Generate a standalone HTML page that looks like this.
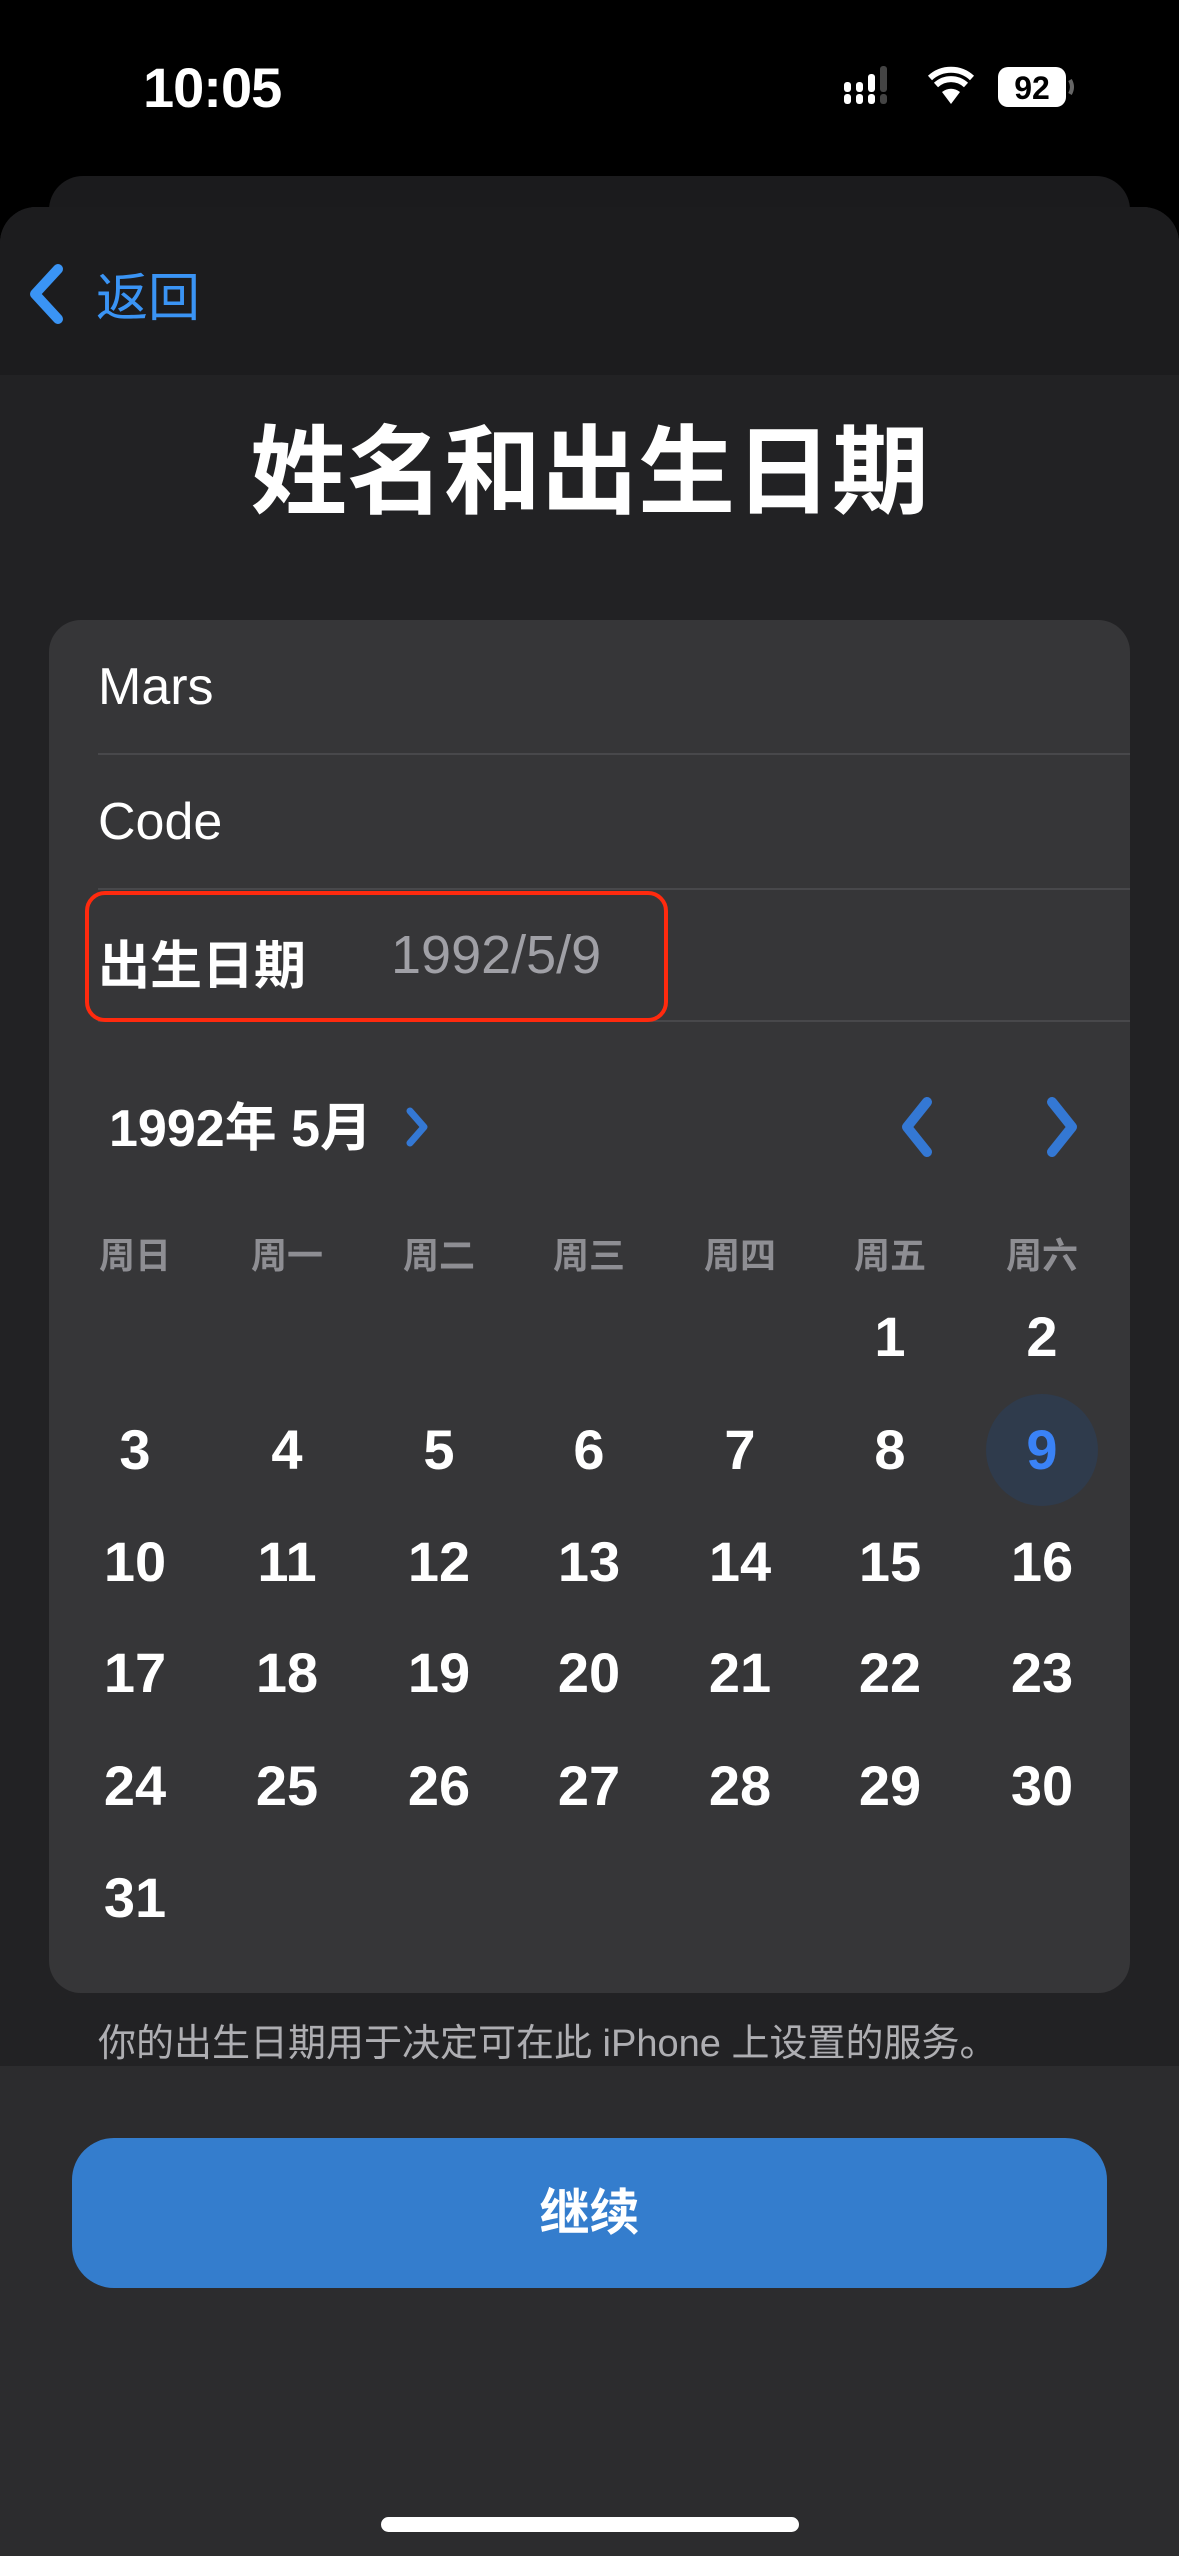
<!DOCTYPE html>
<html><head><meta charset="utf-8"><style>
*{margin:0;padding:0;box-sizing:border-box}
body{width:1179px;height:2556px;background:#000;position:relative;overflow:hidden;font-family:"Liberation Sans","Noto Sans CJK SC",sans-serif;color:#fff}
.abs{position:absolute}
.time{left:143px;top:55px;font-size:56px;font-weight:bold;letter-spacing:-1px}
.back{left:49px;top:176px;width:1081px;height:80px;background:#1b1b1d;border-radius:34px 34px 0 0}
.sheet{left:0;top:207px;width:1179px;height:2349px;background:#222224;border-radius:36px 36px 0 0;overflow:hidden}
.nav{left:0;top:0;width:1179px;height:168px;background:#1c1c1e}
.title{left:0;top:393px;width:1179px;text-align:center;font-size:97px;font-weight:bold}
.card{left:49px;top:620px;width:1081px;height:1373px;background:#363638;border-radius:32px}
.row{left:98px;font-size:52px}
.div{left:98px;width:1032px;height:2px;background:#48484b}
.wd{font-size:36px;color:#8e8e93;width:150px;text-align:center;font-weight:bold}
.d{font-size:56px;width:150px;text-align:center;font-weight:bold}
.bottom{left:0;top:2066px;width:1179px;height:490px;background:#2c2c2e}
</style></head><body>
<div class="abs time">10:05</div>
<svg class="abs" style="left:840px;top:66px" width="260" height="50">
<rect x="4" y="16" width="7" height="10" rx="3" fill="#fff"/><rect x="4" y="28" width="7" height="10" rx="3" fill="#fff"/>
<rect x="16" y="16" width="7" height="10" rx="3" fill="#fff"/><rect x="16" y="28" width="7" height="10" rx="3" fill="#fff"/>
<rect x="28" y="8" width="7" height="18" rx="3" fill="#fff"/><rect x="28" y="28" width="7" height="10" rx="3" fill="#fff"/>
<rect x="40" y="0" width="7" height="26" rx="3" fill="#444"/><rect x="40" y="28" width="7" height="10" rx="3" fill="#444"/>
<g transform="translate(26,0)">
<path d="M85 38 L76 26 A14 14 0 0 1 94 26 Z" fill="#fff"/>
<path d="M70 19 A22 22 0 0 1 100 19" stroke="#fff" stroke-width="6" fill="none"/>
<path d="M64 12 A31 31 0 0 1 106 12" stroke="#fff" stroke-width="6" fill="none"/>
</g>
<rect x="158" y="1" width="68" height="40" rx="10" fill="#fff"/>
<text x="192" y="33" text-anchor="middle" font-size="32" font-weight="bold" fill="#000" font-family="Liberation Sans">92</text>
<path d="M230 14 q4 7 0 14" stroke="#666" stroke-width="4" fill="none"/>
</svg>
<div class="abs back"></div>
<div class="abs sheet">
 <div class="abs nav"></div>
 <svg class="abs" style="left:24px;top:56px" width="44" height="64"><path d="M34 6 L11 31 L34 56" stroke="#3a94f5" stroke-width="10" stroke-linecap="round" stroke-linejoin="round" fill="none"/></svg>
 <div class="abs" style="left:96px;top:49px;font-size:52px;color:#3a94f5">返回</div>
</div>
<div class="abs title">姓名和出生日期</div>
<div class="abs card"></div>
<div class="abs row" style="top:657px">Mars</div>
<div class="abs div" style="top:753px"></div>
<div class="abs row" style="top:792px">Code</div>
<div class="abs div" style="top:888px"></div>
<div class="abs row" style="top:924px;font-weight:bold">出生日期</div>
<div class="abs row" style="top:924px;left:391px;color:#a0a0a6;font-size:54px">1992/5/9</div>
<div class="abs div" style="top:1020px"></div>
<div class="abs" style="left:85px;top:891px;width:583px;height:131px;border:4px solid #ff2a0e;border-radius:20px"></div>
<div class="abs" style="left:109px;top:1086px;font-size:52px;font-weight:bold">1992年 5月</div>
<svg class="abs" style="left:402px;top:1105px" width="30" height="44"><path d="M8 6 L22 22 L8 38" stroke="#3478d4" stroke-width="7" stroke-linecap="round" stroke-linejoin="round" fill="none"/></svg>
<svg class="abs" style="left:895px;top:1096px" width="44" height="62"><path d="M32 6 L12 31 L32 56" stroke="#3478d4" stroke-width="10" stroke-linecap="round" stroke-linejoin="round" fill="none"/></svg>
<svg class="abs" style="left:1040px;top:1096px" width="44" height="62"><path d="M12 6 L32 31 L12 56" stroke="#3478d4" stroke-width="10" stroke-linecap="round" stroke-linejoin="round" fill="none"/></svg>
<div class="abs" style="left:1042px;top:1450px;width:112px;height:112px;margin:-56px 0 0 -56px;border-radius:50%;background:#2f3b4c"></div>
<div id="cal"></div>
<div class="abs" style="left:98px;top:2012px;font-size:38px;color:#aeaeb2">你的出生日期用于决定可在此 iPhone 上设置的服务。</div>
<div class="abs bottom"></div>
<div class="abs" style="left:72px;top:2138px;width:1035px;height:150px;background:#347dcd;border-radius:42px;text-align:center;line-height:150px;font-size:50px;font-weight:bold">继续</div>
<div class="abs" style="left:381px;top:2517px;width:418px;height:15px;border-radius:8px;background:#fff"></div>
<script>
var cx=[135,287,439,589,740,890,1042],ry=[1337,1450,1562,1673,1786,1898];
var wd=["周日","周一","周二","周三","周四","周五","周六"],h="";
wd.forEach(function(w,i){h+='<div class="abs wd" style="left:'+(cx[i]-75)+'px;top:1227px">'+w+'</div>';});
for(var n=1;n<=31;n++){var p=n+4,c=p%7,r=Math.floor(p/7);
h+='<div class="abs d" style="left:'+(cx[c]-75)+'px;top:'+(ry[r]-33)+'px;'+(n==9?'color:#3a82f6':'')+'">'+n+'</div>';}
document.getElementById('cal').innerHTML=h;
</script>
</body></html>
